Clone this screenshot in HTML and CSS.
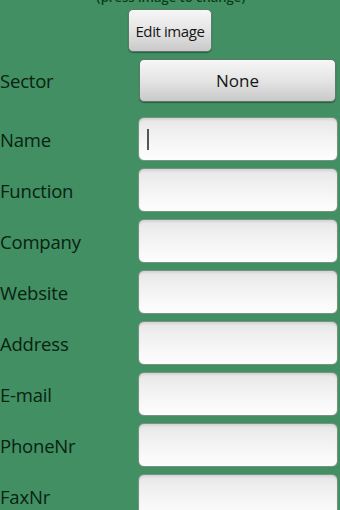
FILE: index.html
```html
<!DOCTYPE html>
<html>
<head>
  <title>Contact</title>
  <link rel="stylesheet" href="styles.css">
</head>
<body>
  <div class="photo-box">
    <p class="caption">(press image to change)</p>
    <button class="button edit-button">Edit image</button>
  </div>

  <div class="form">
    <div class="row sector-row">
      <label class="label">Sector</label>
      <button class="button sector-button">None</button>
    </div>
    <div class="row">
      <label class="label">Name</label>
      <div class="field"><span class="cursor"></span></div>
    </div>
    <div class="row">
      <label class="label">Function</label>
      <div class="field"></div>
    </div>
    <div class="row">
      <label class="label">Company</label>
      <div class="field"></div>
    </div>
    <div class="row">
      <label class="label">Website</label>
      <div class="field"></div>
    </div>
    <div class="row">
      <label class="label">Address</label>
      <div class="field"></div>
    </div>
    <div class="row">
      <label class="label">E-mail</label>
      <div class="field"></div>
    </div>
    <div class="row">
      <label class="label">PhoneNr</label>
      <div class="field"></div>
    </div>
    <div class="row">
      <label class="label">FaxNr</label>
      <div class="field"></div>
    </div>
  </div>
</body>
</html>
```

FILE: styles.css
```css
body {
    margin: 0;
    padding: 0;
    background-color: #418f63;
    font-family: 'Open Sans', 'DejaVu Sans', sans-serif;
    height: 510px;
    overflow: hidden;
}

.photo-box {
    display: flex;
    flex-direction: column;
    align-items: center;
}

.caption {
    margin: -11px 0 0 0;
    padding-left: 2px;
    font-size: 13px;
    line-height: 16px;
    font-weight: 600;
    color: #0a3d1a;
}

.button {
    font-family: 'Open Sans', 'DejaVu Sans', sans-serif;
    font-weight: 500;
    color: #161616;
    border: 1px solid #5e7a66;
    border-radius: 5px;
    background: linear-gradient(#f7f7f7, #e2e2e2 55%, #c9c9c9);
    box-shadow: 0 1px 1px rgba(0, 0, 0, 0.35);
    padding: 0;
}

.edit-button {
    width: 84px;
    height: 43px;
    margin-top: 4px;
    font-size: 15px;
    letter-spacing: -0.4px;
}

.form {
    display: flex;
    flex-direction: column;
    gap: 7px;
    margin-top: 7px;
}

.row {
    display: flex;
    align-items: center;
}

.sector-row {
    margin-bottom: 8px;
}

.label {
    width: 138px;
    font-size: 18.5px;
    font-weight: 500;
    color: #0a2211;
    letter-spacing: -0.2px;
}

.sector-button {
    width: 197px;
    height: 43px;
    margin-left: 1px;
    font-size: 17px;
}

.field {
    width: 198px;
    height: 42px;
    border: 1px solid #78937f;
    border-radius: 6px;
    background: linear-gradient(#e6e6e6, #efefef 30%, #f8f8f8 70%, #fdfdfd);
    box-shadow: inset 0 2px 2px rgba(0, 0, 0, 0.08);
    display: flex;
    align-items: center;
}

.cursor {
    width: 2px;
    height: 21px;
    margin-left: 8px;
    background-color: #555;
}
```
